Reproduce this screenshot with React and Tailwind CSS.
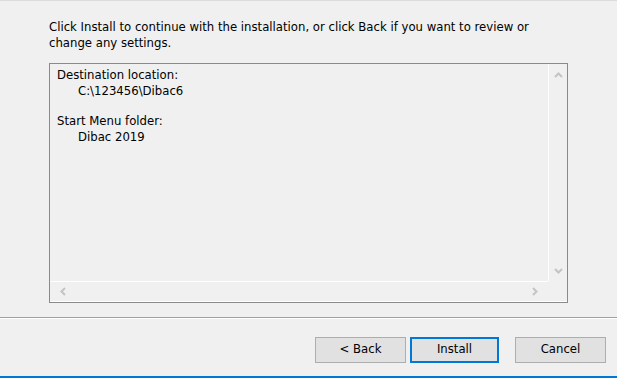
import React from 'react';

const font = { fontFamily: '"DejaVu Sans", Verdana, sans-serif' };

function Chevron({ dir }) {
  const points = {
    up: '2,7 5.5,3.5 9,7',
    down: '2,4 5.5,7.5 9,4',
    left: '7,2 3.5,5.5 7,9',
    right: '4,2 7.5,5.5 4,9',
  }[dir];
  return (
    <svg width="11" height="11" viewBox="0 0 11 11">
      <polyline points={points} fill="none" stroke="#c4c4c4" strokeWidth="2" />
    </svg>
  );
}

function Button({ children, primary }) {
  return (
    <button
      className={
        primary
          ? 'w-[89px] h-[26px] bg-[#e1e1e1] border-2 border-[#0078d7] text-[11.7px] text-black'
          : 'w-[91px] h-[26px] bg-[#e1e1e1] border border-[#adadad] text-[11.7px] text-black'
      }
      style={font}
    >
      {children}
    </button>
  );
}

export default function App() {
  return (
    <div className="w-[617px] h-[378px] bg-[#f0f0f0] flex flex-col overflow-hidden" style={font}>
      <div className="h-px bg-[#dcdcdc]" />

      {/* Intro text */}
      <p className="ml-[49px] mt-[18px] w-[500px] text-[11.7px] leading-[16px] text-black">
        Click Install to continue with the installation, or click Back if you want to review or change any settings.
      </p>

      {/* Memo box */}
      <div className="ml-[49px] mt-[12px] w-[519px] h-[240px] border border-[#8a8a8a] grid grid-cols-[1fr_19px] grid-rows-[1fr_21px]">
        <div className="pl-[7px] pt-[3px] text-[11.7px] leading-[16px] text-black">
          <div>Destination location:</div>
          <div className="pl-[21px]">C:\123456\Dibac6</div>
          <div className="h-[14px]" />
          <div>Start Menu folder:</div>
          <div className="pl-[21px]">Dibac 2019</div>
        </div>
        <div className="border-l border-white flex flex-col items-center justify-between pt-[6px] pb-[5px]">
          <Chevron dir="up" />
          <Chevron dir="down" />
        </div>
        <div className="border-t border-b border-white flex items-center justify-between px-[8px]">
          <Chevron dir="left" />
          <Chevron dir="right" />
        </div>
        <div className="border-b border-white" />
      </div>

      {/* Separator */}
      <div className="mt-[14px] h-px bg-[#a0a0a0]" />
      <div className="h-px bg-white" />

      {/* Buttons */}
      <div className="flex-1 flex items-start pl-[315px] pt-[18px]">
        <Button>&lt; Back</Button>
        <div className="w-[4px]" />
        <Button primary>Install</Button>
        <div className="w-[16px]" />
        <Button>Cancel</Button>
      </div>

      <div className="h-[2px] bg-[#0078d7]" />
    </div>
  );
}
